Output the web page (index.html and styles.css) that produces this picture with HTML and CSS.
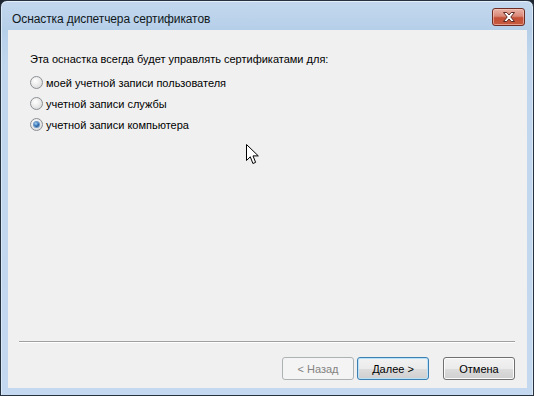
FILE: index.html
```html
<!DOCTYPE html>
<html lang="ru">
<head>
  <meta charset="UTF-8" />
  <title>Оснастка диспетчера сертификатов</title>
  <link rel="stylesheet" href="styles.css">
</head>
<body>
  <div class="window">
    <div class="titlebar">
      <span class="title">Оснастка диспетчера сертификатов</span>
      <button class="close-btn" aria-label="Закрыть">
        <svg width="14" height="10" viewBox="0 0 14 10">
          <path d="M1.5 0.5 H4.8 L7 3 L9.2 0.5 H12.5 L8.8 5 L12.5 9.5 H9.2 L7 7 L4.8 9.5 H1.5 L5.2 5 Z"
                fill="#fff" stroke="#5b2a24" stroke-width="1" stroke-linejoin="round"/>
        </svg>
      </button>
    </div>

    <div class="frame">
      <div class="client">
        <div class="content">
          <div class="lead">Эта оснастка всегда будет управлять сертификатами для:</div>
          <label class="option"><span class="radio"></span>моей учетной записи пользователя</label>
          <label class="option"><span class="radio"></span>учетной записи службы</label>
          <label class="option"><span class="radio checked"></span>учетной записи компьютера</label>
        </div>

        <div class="footer">
          <div class="separator"></div>
          <div class="buttons">
            <button class="btn disabled">&lt; Назад</button>
            <button class="btn default">Далее &gt;</button>
            <button class="btn cancel">Отмена</button>
          </div>
        </div>
      </div>
    </div>
  </div>

  <!-- указатель мыши поверх окна -->
  <svg class="cursor" width="13" height="21" viewBox="0 0 13 21">
    <path d="M0.5 0.5 V16.5 L4.3 12.8 L6.9 19.5 L9.6 18.4 L7 11.9 H12.3 Z"
          fill="#fff" stroke="#000" stroke-width="1" stroke-linejoin="miter"/>
  </svg>
</body>
</html>
```

FILE: styles.css
```css
html, body {
  margin: 0;
  padding: 0;
  background-color: #1d2630;
}
body {
  width: 534px;
  height: 396px;
  overflow: hidden;
  position: relative;
  font-family: 'Liberation Sans', Arial, sans-serif;
  color: #000;
}
.window {
  box-sizing: border-box;
  width: 534px;
  height: 396px;
  border: 1px solid #26323f;
  border-radius: 7px 7px 0 0;
  background: linear-gradient(to bottom, #c3d8ee 0px, #b6cfe9 29px, #c0d6ee 60px, #c4d9ef 100%);
  display: flex;
  flex-direction: column;
  box-shadow: inset 0 1px 0 #e3eef9, inset 1px 0 0 #dbe8f6, inset -1px 0 0 #dbe8f6;
}
.titlebar {
  height: 29px;
  display: flex;
  align-items: center;
  justify-content: space-between;
  padding: 0 8px 0 11px;
}
.title {
  font-size: 12px;
  color: #101820;
  padding-top: 7px;
  letter-spacing: -0.1px;
}
.close-btn {
  box-sizing: border-box;
  width: 33px;
  height: 18px;
  margin-top: 3px;
  padding: 0;
  border: 1px solid #6e2c22;
  border-radius: 3px;
  background: linear-gradient(to bottom, #eab3a7 0%, #d98877 45%, #c44f36 55%, #c65a3f 100%);
  box-shadow: inset 0 0 0 1px rgba(255, 210, 200, 0.55);
  display: flex;
  align-items: center;
  justify-content: center;
}
.frame {
  flex: 1;
  display: flex;
  padding: 0 6px 7px 7px;
}
.client {
  flex: 1;
  background-color: #f0f0f0;
  display: flex;
  flex-direction: column;
  font-size: 11px;
}
.content {
  flex: 1;
  padding: 19px 22px 0 22px;
  display: flex;
  flex-direction: column;
}
.lead {
  line-height: 20px;
  margin-bottom: 3px;
}
.option {
  display: flex;
  align-items: center;
  gap: 3px;
  height: 21px;
}
.radio {
  box-sizing: border-box;
  width: 13px;
  height: 13px;
  border-radius: 50%;
  border: 1px solid #8c8f93;
  background: radial-gradient(circle at 40% 35%, #ffffff 0%, #ececec 45%, #cfd1d3 100%);
  display: flex;
  align-items: center;
  justify-content: center;
}
.radio.checked::after {
  content: '';
  width: 5px;
  height: 5px;
  border-radius: 50%;
  background: radial-gradient(circle at 40% 35%, #a9d7fb 0%, #2f6fb3 50%, #0c2f5c 100%);
  box-shadow: 0 0 0 1px #6b98c8;
}
.footer {
  display: flex;
  flex-direction: column;
}
.separator {
  margin: 0 12px 0 11px;
  height: 1px;
  background-color: #a0a0a0;
  border-bottom: 1px solid #fff;
}
.buttons {
  display: flex;
  justify-content: flex-end;
  padding: 14px 12px 8px 0;
}
.btn {
  box-sizing: border-box;
  width: 72px;
  height: 23px;
  padding: 0;
  font-family: 'Liberation Sans', Arial, sans-serif;
  font-size: 11px;
  color: #000;
  border: 1px solid #707070;
  border-radius: 3px;
  background: linear-gradient(to bottom, #f2f2f2 0%, #ebebeb 50%, #dddddd 50%, #cfcfcf 100%);
  box-shadow: inset 0 0 0 1px #fcfcfc;
}
.btn.disabled {
  color: #838383;
  border-color: #adb2b5;
  background: #f4f4f4;
  box-shadow: none;
}
.btn.default {
  margin-left: 3px;
  border-color: #3c7fb1;
  box-shadow: inset 0 0 0 1px #b9e1f8;
}
.btn.cancel {
  margin-left: 14px;
}
.cursor {
  position: absolute;
  left: 246px;
  top: 144px;
}
```
